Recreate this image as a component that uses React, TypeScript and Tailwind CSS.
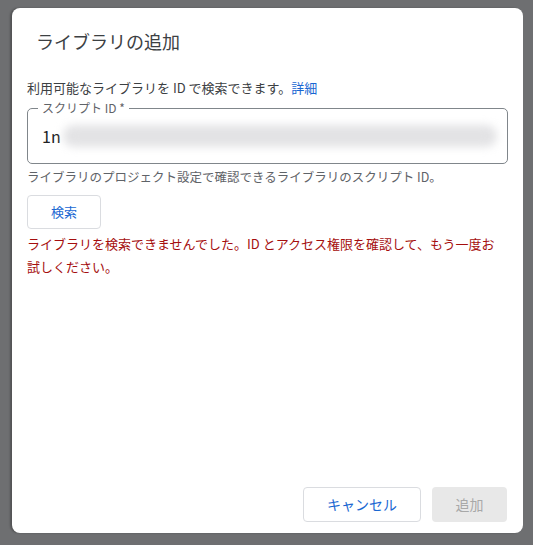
import React from 'react';

const font = { fontFamily: '"Noto Sans CJK JP", "Noto Sans", sans-serif' };

export default function App() {
  return (
    <div className="w-[533px] h-[545px] bg-[#6e6f71] pt-[8px] pl-[12px] pr-[10px] pb-[12px]" style={font}>
      <div className="h-full bg-white rounded-lg shadow-[-2px_0_2px_rgba(0,0,0,0.25)] flex flex-col">
        <h1 className="pt-[21px] pl-[24px] text-[18px] leading-[24px] text-[#3c4043]">ライブラリの追加</h1>

        <div className="px-[15px] pt-[25px] flex-1">
          <p className="text-[13px] leading-[20px] text-[#3c4043]">
            利用可能なライブラリを ID で検索できます。<span className="text-[#1967d2]">詳細</span>
          </p>

          <div className="relative mt-[10px] h-[56px] border border-[#80868b] rounded-[5px] flex items-center pl-[14px] pr-[10px]">
            <span className="absolute -top-[9px] left-[10px] bg-white px-[4px] text-[12px] leading-[16px] text-[#5f6368]">
              スクリプト ID *
            </span>
            <span className="text-[16px] text-[#202124]">1n</span>
            <div className="ml-[2px] flex-1 h-[22px] bg-[#e3e3e5] rounded-full blur-[4px]" />
          </div>

          <p className="mt-[4px] text-[12.5px] leading-[18px] text-[#5f6368]">
            ライブラリのプロジェクト設定で確認できるライブラリのスクリプト ID。
          </p>

          <button className="mt-[9px] w-[74px] h-[34px] border border-[#dadce0] rounded-[4px] text-[13px] text-[#1967d2]">
            検索
          </button>

          <p className="mt-[3px] pr-[6px] text-[13px] leading-[23px] text-[#a50e0e]">
            ライブラリを検索できませんでした。ID とアクセス権限を確認して、もう一度お試しください。
          </p>
        </div>

        <div className="flex justify-end gap-[11px] pr-[16px] pb-[11px]">
          <button className="w-[118px] h-[35px] border border-[#dadce0] rounded-[4px] text-[14px] text-[#1967d2]">
            キャンセル
          </button>
          <button className="w-[75px] h-[35px] bg-[#e8e8e8] rounded-[4px] text-[14px] text-[#a8a8a8]">
            追加
          </button>
        </div>
      </div>
    </div>
  );
}
